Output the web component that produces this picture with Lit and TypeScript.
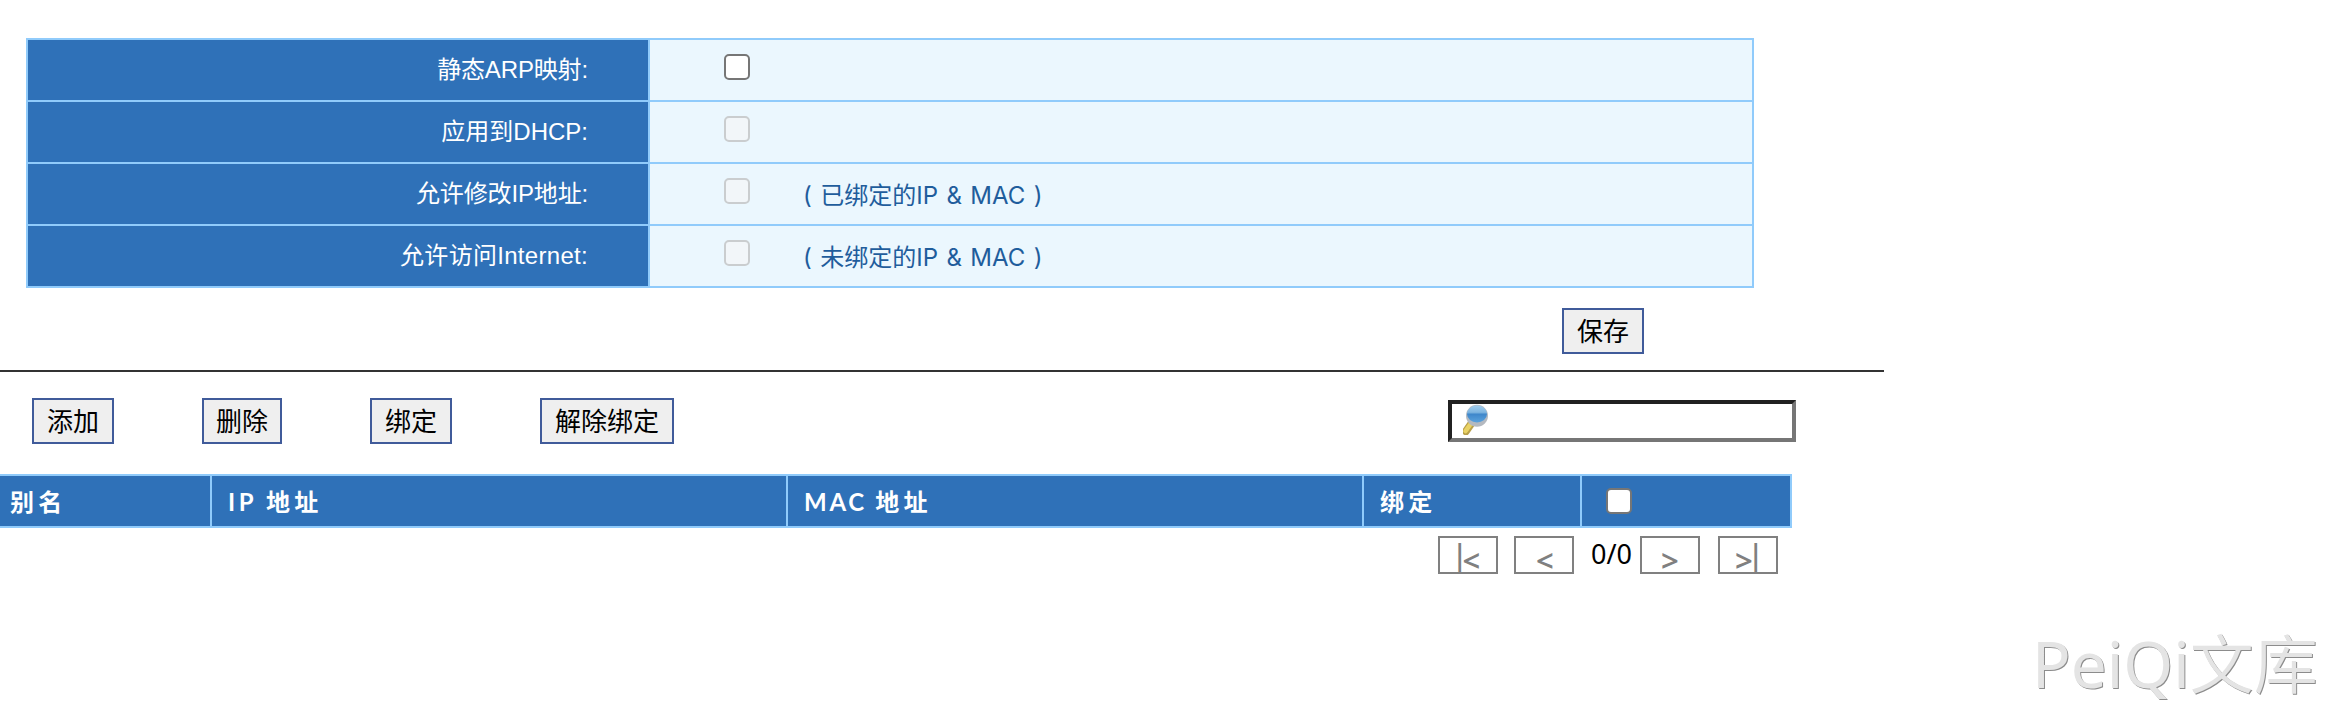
import { LitElement, html, css } from "lit";
import { customElement, property } from "lit/decorators.js";

@customElement("check-box")
class CheckBox extends LitElement {
  @property({ type: Boolean, reflect: true }) disabled = false;
  static styles = css`
    :host { display: block; flex: none; box-sizing: border-box; width: 26px; height: 26px;
      border: 2px solid #767676; border-radius: 5px; background: #fff; }
    :host([disabled]) { border-color: #cacdcf; background: #f2f6f9; }
  `;
  render() { return html``; }
}

@customElement("app-root")
class AppRoot extends LitElement {
  static styles = css`
    :host { display: block; position: relative; width: 2326px; height: 710px; overflow: hidden;
      background: #fff; font-family: "Liberation Sans", "Noto Sans CJK SC", sans-serif; font-size: 24px; color: #000; }
    * { box-sizing: border-box; }
    .settings { margin: 0 0 0 26px; width: 1728px; border: 2px solid #90cbfb; background: #90cbfb;
      display: flex; flex-direction: column; gap: 2px; }
    .page { padding-top: 38px; }
    .row { display: grid; grid-template-columns: 620px 1fr; gap: 2px; height: 60px; }
    .label { background: #2f71b8; color: #fff; text-align: right; padding: 12px 60px 0 0; line-height: 36px; }
    .tight { letter-spacing: -.15px; }
    .loose { letter-spacing: .3px; }
    .value { background: #ebf7fe; display: flex; padding: 14px 0 0 74px; }
    .note { color: #1f5d9c; margin: 2px 0 0 53px; line-height: 32px; white-space: pre; word-spacing: 1.7px;
      font-family: Inter, "Noto Sans CJK SC", sans-serif; }
    .btn { display: block; height: 46px; border: 2px solid #405b9a; border-radius: 0; background: #efefef; color: #000;
      font: 26px/40px "Noto Sans CJK SC", sans-serif; padding: 0 0 2px; text-align: center; white-space: nowrap; }
    .save { width: 82px; margin: 20px 0 0 1562px; }
    .rule { width: 1884px; height: 2px; background: #333; margin-top: 16px; }
    .tools { display: flex; margin: 26px 0 0 32px; height: 46px; }
    .w1 { width: 82px; margin-right: 88px; }
    .w2 { width: 80px; margin-right: 88px; }
    .w4 { width: 134px; margin-right: 774px; }
    .search { width: 348px; height: 42px; margin-top: 2px; border: 4px solid; border-color: #212121 #767676 #767676 #212121;
      background: #fff; padding: 0 0 0 8px; }
    .search svg { display: block; }
    .head { margin-top: 30px; width: 1792px; height: 54px; background: #90cbfb; padding: 2px 2px 2px 0;
      display: grid; grid-template-columns: 210px 574px 574px 216px 208px; gap: 2px; }
    .th { background: #2f71b8; color: #fff; font: bold 24px/51px Lato, "Noto Sans CJK SC", sans-serif;
      letter-spacing: 4.2px; padding-left: 16px; white-space: pre; height: 50px; }
    .ip { letter-spacing: 3.6px; }
    .mac { letter-spacing: 2.7px; }
    .first { padding-left: 10px; }
    .pick { padding: 12px 0 0 24px; }
    .pager { display: flex; margin: 8px 0 0 1438px; height: 38px; font-family: "Noto Sans", sans-serif; }
    .pg { width: 60px; height: 38px; border: 2px solid #808080; background: #fff; color: #808080;
      display: flex; white-space: pre; font-weight: 600; }
    .bar { font-size: 28px; line-height: 32px; }
    .arrow { font-size: 31px; line-height: 25px; padding-top: 10px; }
    .to-first { padding-left: 12px; }
    .to-first .bar { margin-right: -5px; }
    .prev { margin-left: 16px; padding-left: 20px; }
    .next { padding-left: 19px; }
    .last { margin-left: 18px; padding-left: 15px; }
    .last .bar { margin-left: -4.700px; }
    .count { width: 66px; padding-left: 17px; line-height: 35px; font-size: 27px; }
    .mark { position: absolute; left: 2032px; top: 614px; font: 400 64px/100px "Noto Sans", "Noto Sans CJK SC", sans-serif;
      color: #e4e4e4; text-shadow: 1px 1px 0 #8c8c8c; white-space: nowrap; }
    .cjk { font-weight: 350; }
  `;

  private rows = [
    { label: "静态ARP映射:", fit: "tight", off: false, note: "" },
    { label: "应用到DHCP:", fit: "", off: true, note: "" },
    { label: "允许修改IP地址:", fit: "tight", off: true, note: "( 已绑定的IP & MAC )" },
    { label: "允许访问Internet:", fit: "loose", off: true, note: "( 未绑定的IP & MAC )" },
  ];

  render() {
    return html`
      <div class="page">
        <div class="settings">
          ${this.rows.map((r) => html`<div class="row">
            <div class="label ${r.fit}">${r.label}</div>
            <div class="value"><check-box ?disabled=${r.off}></check-box><span class="note">${r.note}</span></div>
          </div>`)}
        </div>
        <button class="btn save">保存</button>
        <div class="rule"></div>
        <div class="tools">
          <button class="btn w1">添加</button>
          <button class="btn w2">删除</button>
          <button class="btn w1">绑定</button>
          <button class="btn w4">解除绑定</button>
          <div class="search">
            <svg width="32" height="34" viewBox="0 0 32 34">
              <defs>
                <linearGradient id="lens" x1="0" y1="0" x2="0" y2="1">
                  <stop offset="0" stop-color="#9fcdee"/><stop offset=".4" stop-color="#7eb5e0"/>
                  <stop offset=".52" stop-color="#3f87cb"/><stop offset="1" stop-color="#5ba3dd"/>
                </linearGradient>
                <filter id="soft"><feGaussianBlur stdDeviation=".6"/></filter>
              </defs>
              <g filter="url(#soft)">
                <path d="M11 20 5.800 27.500" stroke="#b9a04a" stroke-width="7.600" stroke-linecap="round"/>
                <path d="M11 19.500 5.600 27" stroke="#e9d265" stroke-width="4.600" stroke-linecap="round"/>
                <circle cx="17" cy="11.800" r="11" fill="#b4b9c0"/>
                <ellipse cx="17" cy="10" rx="10" ry="8.500" fill="url(#lens)"/>
              </g>
            </svg>
          </div>
        </div>
        <div class="head">
          <div class="th first">别名</div>
          <div class="th"><span class="ip">IP </span>地址</div>
          <div class="th"><span class="mac">MAC </span>地址</div>
          <div class="th">绑定</div>
          <div class="th pick"><check-box></check-box></div>
        </div>
        <div class="pager">
          <div class="pg to-first"><span class="bar">|</span><span class="arrow">&lt;</span></div>
          <div class="pg prev"><span class="arrow">&lt;</span></div>
          <span class="count">0/0</span>
          <div class="pg next"><span class="arrow">&gt;</span></div>
          <div class="pg last"><span class="arrow">&gt;</span><span class="bar">|</span></div>
        </div>
      </div>
      <div class="mark">PeiQi<span class="cjk">文库</span></div>
    `;
  }
}
